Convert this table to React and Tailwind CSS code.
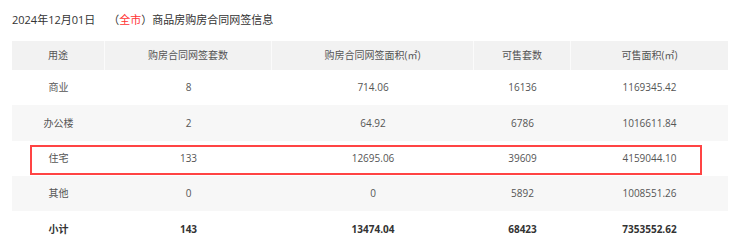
const cols = ['w-[93px]', 'w-[167px]', 'w-[202px]', 'w-[97px]', 'w-[157px]']

const head = ['用途', '购房合同网签套数', '购房合同网签面积(㎡)', '可售套数', '可售面积(㎡)']

const rows = [
  ['商业', '8', '714.06', '16136', '1169345.42'],
  ['办公楼', '2', '64.92', '6786', '1016611.84'],
  ['住宅', '133', '12695.06', '39609', '4159044.10'],
  ['其他', '0', '0', '5892', '1008551.26'],
]

const total = ['小计', '143', '13474.04', '68423', '7353552.62']

export default function App() {
  return (
    <div
      className="w-[740px] h-[249px] bg-white px-3 text-[#555]"
      style={{ fontFamily: '"Open Sans", "Noto Sans CJK SC", sans-serif' }}
    >
      <div className="h-[41px] flex items-center text-[11px] text-[#333]">
        <span>2024年12月01日</span>
        <span className="ml-[13px]">（</span>
        <span className="text-[#f33]">全市</span>
        <span>）商品房购房合同网签信息</span>
      </div>

      <div className="w-[716px] text-[10px]">
        <div className="flex h-[29px] bg-[#f2f2f2]">
          {head.map((h, i) => (
            <div
              key={h}
              className={`${cols[i]} flex items-center justify-center ${i < 4 ? 'border-r border-[#fbfbfb]' : ''}`}
            >
              {h}
            </div>
          ))}
        </div>

        {rows.map((r, ri) => (
          <div
            key={r[0]}
            className={`relative flex ${ri === 2 ? 'h-[35px]' : ri === 1 ? 'h-[36px]' : 'h-[35px]'} ${ri % 2 === 1 ? 'bg-[#f7f7f7]' : 'bg-white'}`}
          >
            {r.map((c, i) => (
              <div key={i} className={`${cols[i]} flex items-center justify-center`}>
                {c}
              </div>
            ))}
            {r[0] === '住宅' && (
              <div className="absolute left-[18px] top-[4px] w-[672px] h-[30px] border-2 border-[#f44]" />
            )}
          </div>
        ))}

        <div className="flex h-[36px] font-bold text-[#333]">
          {total.map((c, i) => (
            <div key={i} className={`${cols[i]} flex items-center justify-center`}>
              {c}
            </div>
          ))}
        </div>
      </div>
    </div>
  )
}
